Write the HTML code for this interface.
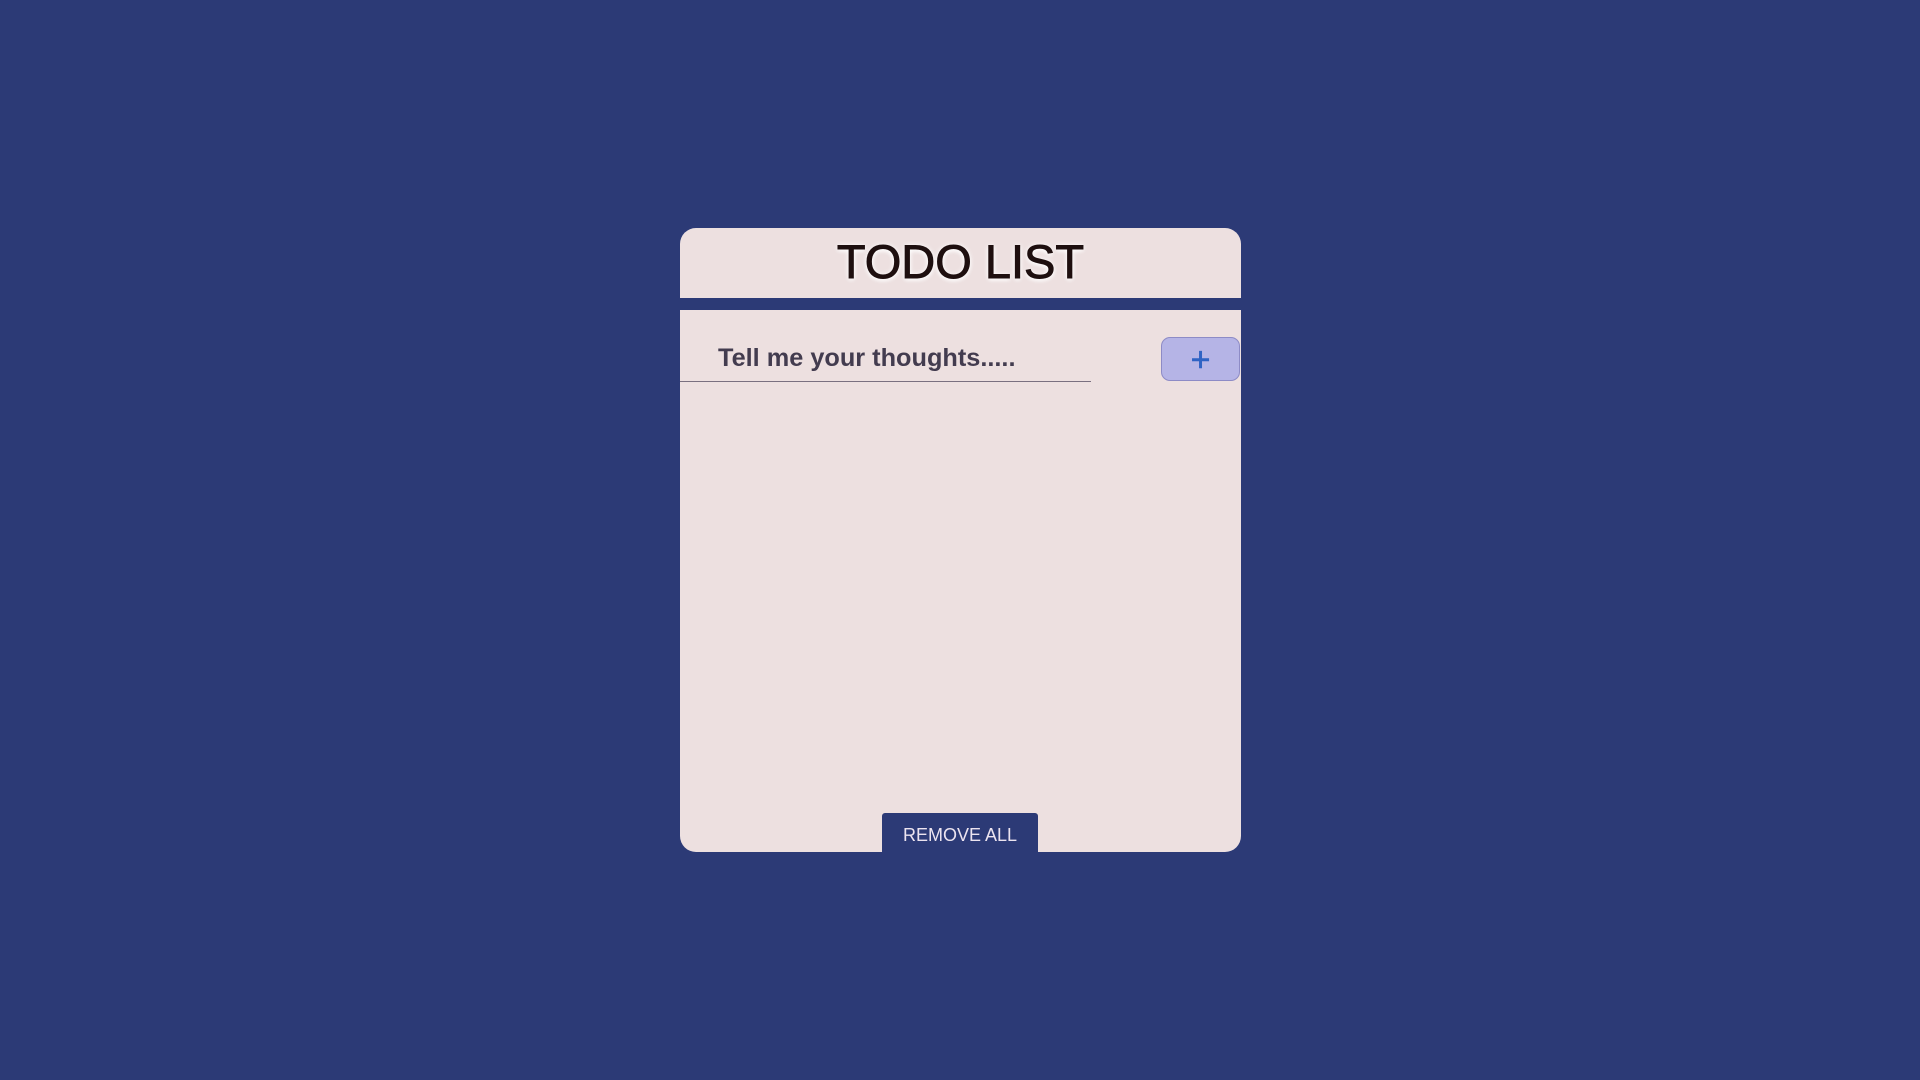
<!DOCTYPE html>
<html><head><meta charset="utf-8"><style>
html,body{margin:0;padding:0;width:1920px;height:1080px;background:#2c3a76;overflow:hidden;font-family:"Liberation Sans",sans-serif}
.card{position:absolute;left:680px;top:228px;width:561px;height:624px;background:#ede0e0;border-radius:16px;overflow:hidden}
.bar{position:absolute;left:0;top:70px;width:100%;height:12px;background:#2c3a76}
h1{position:absolute;left:0;top:0;width:100%;margin:0;text-align:center;font-size:47px;font-weight:normal;line-height:1;padding-top:10px;color:#1e0f0f;text-shadow:0 0 6px #fff,0 2px 4px #fff;-webkit-text-stroke:0.9px #1e0f0f}
.in{position:absolute;left:38px;top:116px;font-size:25.3px;font-weight:bold;color:#433c4f}
.line{position:absolute;left:0;top:153px;width:411px;height:1px;background:#7a7080}
.plus{position:absolute;left:481px;top:109px;width:79px;height:44px;background:#b5b4e6;border:1px solid #8d8bc6;border-radius:9px;box-sizing:border-box;color:#2f63c4;font-size:34px;text-align:center;line-height:44px;-webkit-text-stroke:0.5px #2f63c4}
.rm{position:absolute;left:202px;top:585px;width:156px;height:40px;background:#2c3a76;color:#ece4f0;font-size:18px;text-align:center;line-height:44px;border-radius:3px 3px 0 0}
</style></head><body>
<div class="card">
<h1>TODO LIST</h1>
<div class="bar"></div>
<div class="in">Tell me your thoughts.....</div>
<div class="line"></div>
<div class="plus">+</div>
<div class="rm">REMOVE ALL</div>
</div>
</body></html>
